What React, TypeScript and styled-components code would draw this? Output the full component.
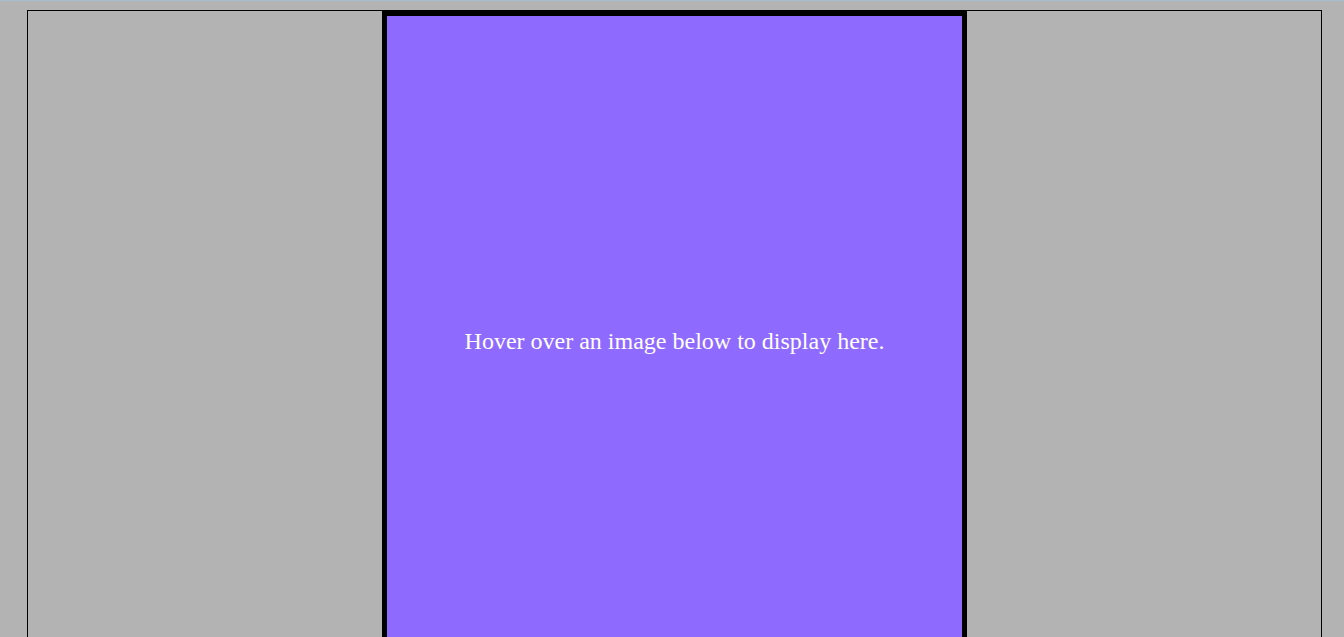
import React from "react";
import styled, { createGlobalStyle } from "styled-components";

const Global = createGlobalStyle`
  html, body {
    margin: 0;
    padding: 0;
    background: #b3b3b3;
  }
  body {
    border-top: 1px solid #a9bccf;
    font-family: "Liberation Serif", "Times New Roman", serif;
  }
`;

const Frame = styled.div`
  margin: 9px 22px 0 27px;
  border: 1px solid #000;
  height: 700px;
`;

const Display = styled.div`
  width: 575px;
  height: 650px;
  margin: 0 auto;
  border: 5px solid #000;
  background-color: #8f6aff;
  color: #ffffff;
  text-align: center;
  line-height: 650px;
  font-size: 24px;
`;

export default function App() {
  return (
    <>
      <Global />
      <Frame>
        <Display>Hover over an image below to display here.</Display>
      </Frame>
    </>
  );
}
